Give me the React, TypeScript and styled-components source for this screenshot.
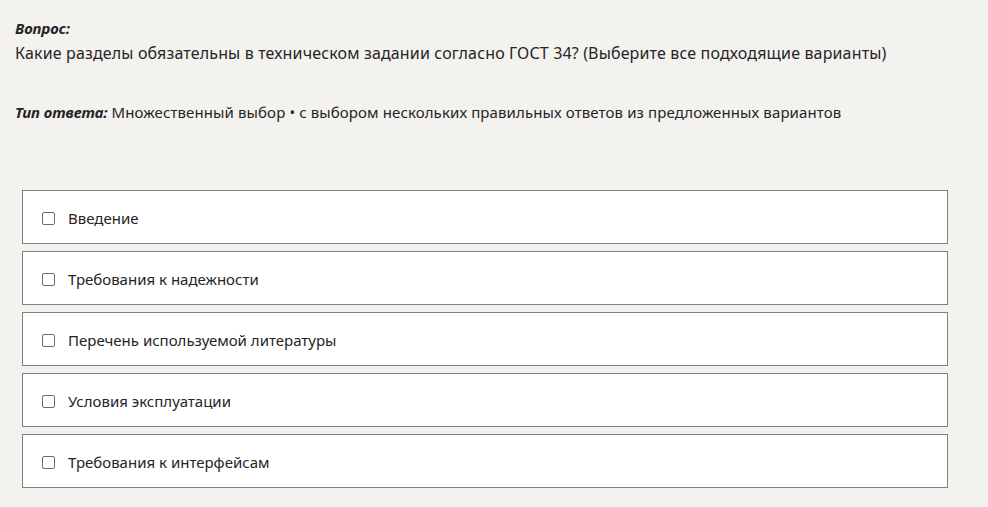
import React from "react";
import styled, { createGlobalStyle } from "styled-components";

const options = [
  "Введение",
  "Требования к надежности",
  "Перечень используемой литературы",
  "Условия эксплуатации",
  "Требования к интерфейсам",
];

const GlobalStyle = createGlobalStyle`
  html, body {
    margin: 0;
    padding: 0;
    background: #f3f2ef;
  }
  body {
    font-family: "Noto Sans", "Open Sans", sans-serif;
    font-size: 15px;
    color: #252525;
  }
`;

export default function App() {
  return (
    <>
      <GlobalStyle />
      <Page>
        <Label>Вопрос:</Label>
        <Question>
          Какие разделы обязательны в техническом задании согласно ГОСТ 34?
          (Выберите все подходящие варианты)
        </Question>
        <AnswerType>
          <Label as="span">Тип ответа:</Label> Множественный выбор • с выбором
          нескольких правильных ответов из предложенных вариантов
        </AnswerType>
        <OptionList>
          {options.map((text) => (
            <Option key={text}>
              <Checkbox type="checkbox" />
              <OptionText>{text}</OptionText>
            </Option>
          ))}
        </OptionList>
      </Page>
    </>
  );
}

const Page = styled.div`
  padding: 17px 40px 0 15px;
`;

const Label = styled.div`
  font-weight: 700;
  font-style: italic;
  line-height: 22px;
  letter-spacing: -0.1px;
`;

const Question = styled.div`
  margin-top: 2px;
  font-size: 16px;
  line-height: 24px;
  letter-spacing: 0.15px;
`;

const AnswerType = styled.div`
  margin-top: 36px;
  line-height: 22px;
  letter-spacing: 0.11px;
`;

const OptionList = styled.div`
  margin: 67px 0 0 7px;
  display: flex;
  flex-direction: column;
  gap: 7px;
`;

const Option = styled.label`
  display: flex;
  align-items: center;
  box-sizing: border-box;
  height: 54px;
  padding: 2px 19px 0;
  background: #ffffff;
  border: 1px solid #7f7f7f;
`;

const Checkbox = styled.input`
  appearance: none;
  width: 13px;
  height: 13px;
  margin: 0 13px 0 0;
  border: 1px solid #6b6b6b;
  border-radius: 2px;
  background: #fff;
  flex-shrink: 0;
`;

const OptionText = styled.span`
  line-height: 20px;
`;
